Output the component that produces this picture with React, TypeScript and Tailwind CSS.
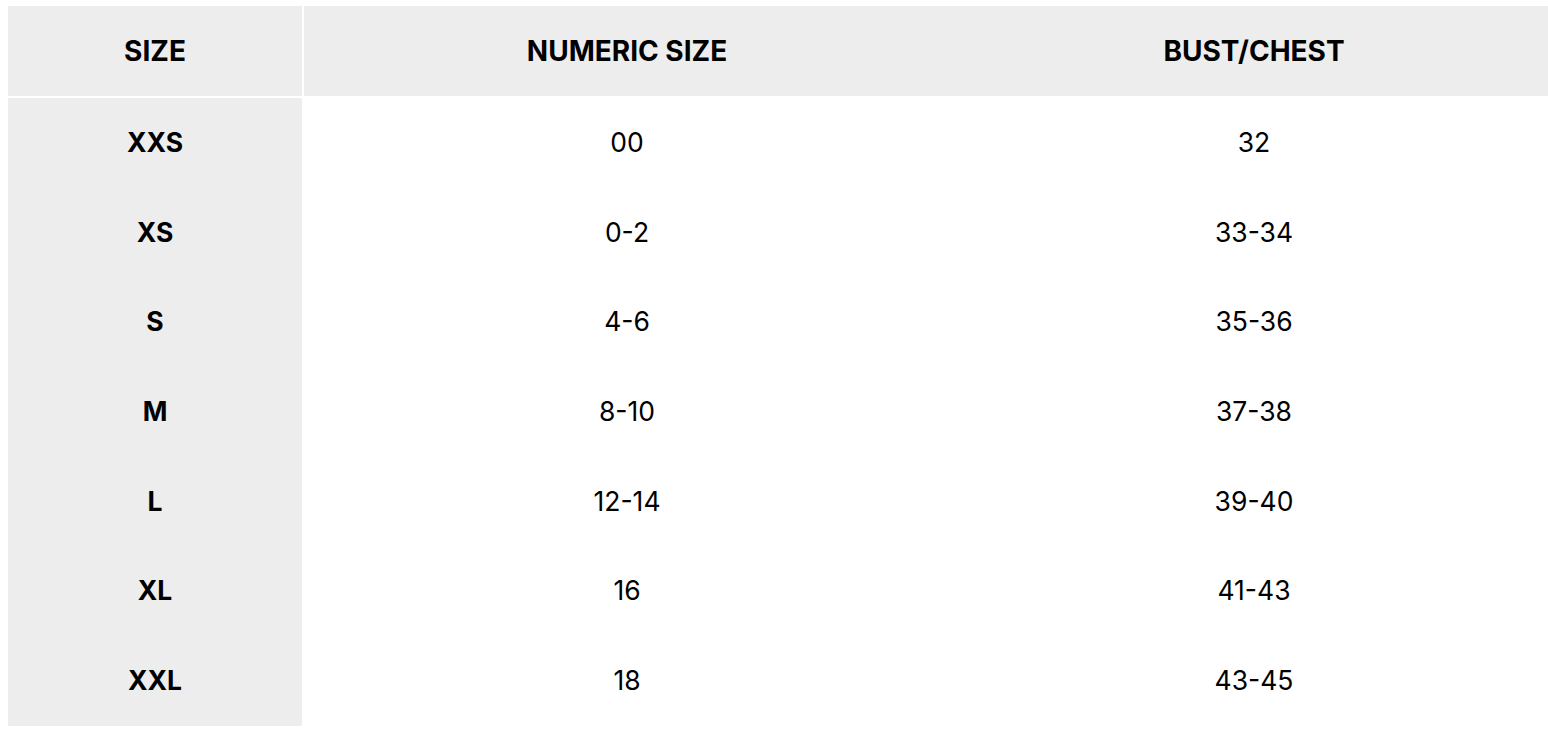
const rows: [string, string, string][] = [
  ["XXS", "00", "32"],
  ["XS", "0-2", "33-34"],
  ["S", "4-6", "35-36"],
  ["M", "8-10", "37-38"],
  ["L", "12-14", "39-40"],
  ["XL", "16", "41-43"],
  ["XXL", "18", "43-45"],
];

export default function App() {
  return (
    <div className="h-[732px] w-full overflow-hidden bg-white pl-[8px] pt-[6px] text-black [font-family:Inter,'Noto_Sans',sans-serif]">
      <table className="w-[1550px] table-fixed border-separate border-spacing-0">
        <colgroup>
          <col className="w-[296px]" />
          <col className="w-[646px]" />
          <col className="w-[608px]" />
        </colgroup>
        <thead>
          <tr className="h-[92px] text-[28px]">
            <th className="border-r-2 border-b-2 border-white bg-[#ededed] text-center align-middle font-bold">SIZE</th>
            <th className="border-b-2 border-white bg-[#ededed] text-center align-middle font-bold">NUMERIC SIZE</th>
            <th className="border-b-2 border-white bg-[#ededed] text-center align-middle font-bold">BUST/CHEST</th>
          </tr>
        </thead>
        <tbody className="text-[26.5px]">
          {rows.map(([size, numeric, bust]) => (
            <tr key={size} className="h-[89.7px]">
              <td className="border-r-2 border-white bg-[#ededed] text-center align-middle font-bold">{size}</td>
              <td className="text-center align-middle">{numeric}</td>
              <td className="text-center align-middle">{bust}</td>
            </tr>
          ))}
        </tbody>
      </table>
    </div>
  );
}
